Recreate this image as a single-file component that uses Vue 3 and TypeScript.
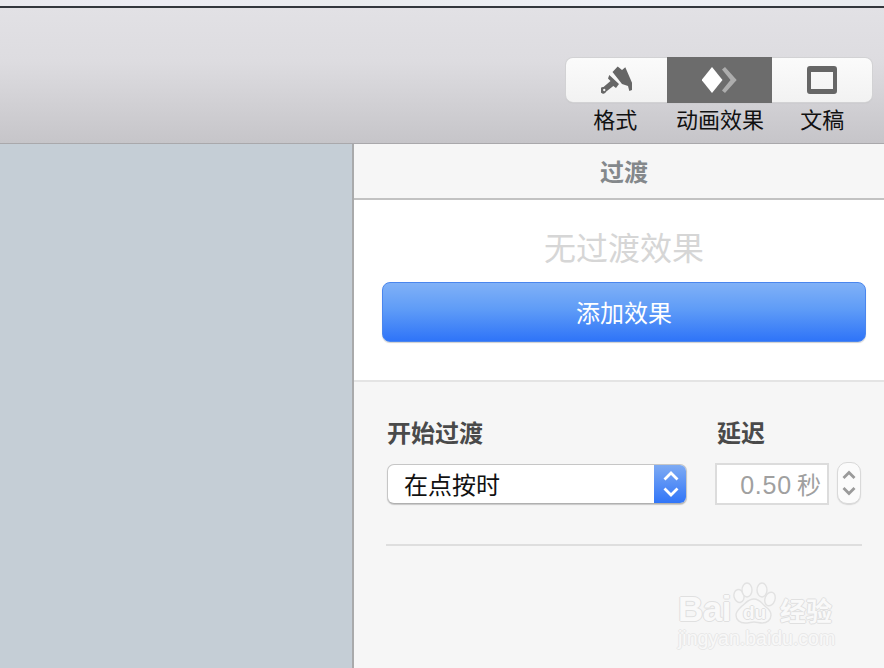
<script setup lang="ts">
const tabs = ['格式', '动画效果', '文稿']
</script>

<template>
  <div class="window">
    <div class="strip"></div>
    <header class="toolbar">
      <div class="tabs">
        <div class="seg seg-a">
          <svg width="32" height="28" viewBox="0 0 32 28">
            <path d="M11.500 6L16.700.5 21 4l3.300-2.700L31 16.700V24l-2.700 1-1.300-5-6-2z" fill="#666"/>
            <path fill-rule="evenodd" d="M8.300 9l9.700 9-3 4-2.700-2-7 5.500A3.300 3.300 0 1 1 2.500 21L9.500 15 7 12.500zM3.200 22.800a1.200 1.200 0 1 0 .1 0z" fill="#666"/>
          </svg>
        </div>
        <div class="seg seg-b">
          <svg width="35" height="28" viewBox="0 0 35 28">
            <path d="M20 3.500L23 1l11.700 13L23 27l-3-2.500L28.500 14z" fill="#adadad"/>
            <path d="M10 1L20.500 14 10 27-.5 14z" fill="#fff"/>
          </svg>
        </div>
        <div class="seg seg-c"><span class="doc"></span></div>
      </div>
      <div class="labels">
        <span v-for="t in tabs" :key="t">{{ t }}</span>
      </div>
    </header>
    <div class="body">
      <aside class="canvas"></aside>
      <section class="panel">
        <div class="panel-head">过渡</div>
        <div class="effect">
          <div class="none">无过渡效果</div>
          <button class="add">添加效果</button>
        </div>
        <div class="settings">
          <div class="row">
            <div class="col-start">
              <div class="label">开始过渡</div>
              <div class="select">
                <span class="select-text">在点按时</span>
                <span class="select-arrows">
                  <svg width="18" height="30" viewBox="0 0 18 30" fill="none" stroke="#fff" stroke-width="2.800">
                    <path d="M2.500 10.500L9 4l6.500 6.500M2.500 19.500L9 26l6.500-6.500"/>
                  </svg>
                </span>
              </div>
            </div>
            <div class="col-delay">
              <div class="label">延迟</div>
              <div class="delay-row">
                <div class="input"><span class="num">0.50</span><span>秒</span></div>
                <div class="stepper">
                  <svg width="14" height="30" viewBox="0 0 14 30" fill="none" stroke="#9a9a9a" stroke-width="2.800">
                    <path d="M1.500 10L7 4.500 12.500 10M1.500 20L7 25.500 12.500 20"/>
                  </svg>
                </div>
              </div>
            </div>
          </div>
          <div class="divider"></div>
        </div>
      </section>
    </div>
    <div class="mark">
      <svg class="paw" width="46" height="44" viewBox="0 0 46 44" fill="#f8f8f8" stroke="#e2e2e2" stroke-width="1.400">
        <ellipse cx="7" cy="14" rx="5" ry="6.500" transform="rotate(-15 7 14)"/>
        <ellipse cx="15" cy="8" rx="5" ry="7"/>
        <ellipse cx="30" cy="8" rx="5" ry="7"/>
        <ellipse cx="38" cy="17" rx="5" ry="7" transform="rotate(20 38 17)"/>
        <path d="M22 17c6 0 8 5 12 8 4 3 5 5 5 8 0 5-4 8-9 8-3 0-5-1-8-1s-5 1-9 1c-5 0-9-3-9-8 0-4 3-6 6-9 4-3 6-7 12-7z"/>
      </svg>
      <div class="mark-main">
        <span class="bai">Bai</span><span class="du">du</span><span class="jy">经验</span>
      </div>
      <div class="mark-url">jingyan.baidu.com</div>
    </div>
  </div>
</template>

<style>
html, body { margin: 0; padding: 0; }
</style>

<style scoped>
.window {
  position: relative;
  width: 884px;
  height: 668px;
  overflow: hidden;
  display: flex;
  flex-direction: column;
  font-family: "Noto Sans CJK SC", "Liberation Sans", sans-serif;
  background: #f6f6f6;
}
.strip {
  height: 6px;
  flex: none;
  background: linear-gradient(90deg, #e9e9ee, #ececf3 18%, #e9ebee 40%, #eef0f6 70%, #e8ebef);
  border-bottom: 2px solid #33373d;
}
.toolbar {
  height: 136px;
  flex: none;
  box-sizing: border-box;
  padding: 50px 12px 0 566px;
  background: linear-gradient(180deg, #e2e1e5 0%, #dddce0 40%, #c6c5c9 100%);
  border-bottom: 1px solid #a9a8ab;
}
.tabs {
  display: flex;
  width: 306px;
  height: 44px;
  box-sizing: border-box;
  border-radius: 7px;
  box-shadow: 0 0 0 1px #d2d2d4, 0 1px 1px #b0b0b0;
}
.seg {
  display: flex;
  align-items: center;
  justify-content: center;
  background: linear-gradient(180deg, #fbfbfb, #f2f2f2);
}
.seg-a { width: 101px; border-radius: 7px 0 0 7px; }
.seg-b { width: 105px; background: #6c6c6c; box-shadow: 0 -1px 0 #6c6c6c, 0 1px 0 #6c6c6c; }
.seg-c { width: 100px; border-radius: 0 7px 7px 0; }
.doc {
  display: block;
  width: 30px;
  height: 28px;
  box-sizing: border-box;
  border: 4px solid #666;
  border-top-width: 6px;
  border-bottom-width: 5px;
  border-radius: 3px;
}
.labels {
  display: flex;
  width: 306px;
  font-size: 22px;
  line-height: 32px;
  margin-top: 0;
  color: #111;
}
.labels span { text-align: center; }
.labels span:nth-child(1) { width: 101px; margin-left: -1px; margin-right: 1px; }
.labels span:nth-child(2) { width: 105px; margin-left: 1px; margin-right: -1px; }
.labels span:nth-child(3) { width: 100px; margin-left: 1px; }
.body {
  flex: 1;
  display: flex;
  min-height: 0;
}
.canvas {
  width: 352px;
  flex: none;
  background: #c5ced6;
  border-right: 2px solid #a9aaab;
}
.panel {
  flex: 1;
  min-width: 0;
  display: flex;
  flex-direction: column;
}
.panel-head {
  height: 54px;
  flex: none;
  box-sizing: content-box;
  padding-left: 10px;
  text-align: center;
  font-size: 24px;
  font-weight: 700;
  line-height: 54px;
  color: #84888b;
  border-bottom: 2px solid #c2c2c2;
}
.effect {
  height: 182px;
  flex: none;
  box-sizing: border-box;
  background: #fff;
  border-bottom: 2px solid #e4e4e4;
  padding: 23px 18px 0 28px;
}
.none {
  text-align: center;
  font-size: 32px;
  line-height: 46px;
  color: #d6d6d6;
  height: 59px;
}
.add {
  display: block;
  width: 100%;
  height: 60px;
  padding: 0 0 2px;
  border: 1px solid #4a86ee;
  border-radius: 8px;
  background: linear-gradient(180deg, #80b1f7 0%, #5f9cf7 45%, #2f74f8 100%);
  color: #fff;
  font-family: inherit;
  font-size: 24px;
  box-shadow: 0 1px 1px #d0d0d0;
}
.settings {
  padding: 33px 22px 0 32px;
}
.row {
  display: flex;
  height: 129px;
  box-sizing: border-box;
}
.col-start { width: 329px; margin-left: 1px; }
.col-delay { flex: 1; }
.label {
  font-size: 24px;
  font-weight: 700;
  line-height: 34px;
  color: #4a4a4a;
  height: 49px;
}
.col-delay .label { margin-left: 1px; }
.select {
  width: 300px;
  height: 40px;
  box-sizing: border-box;
  display: flex;
  background: #fff;
  border: 1px solid #c6c6c6;
  border-bottom-color: #b0b0b0;
  border-radius: 7px;
  overflow: hidden;
  box-shadow: 0 1px 1px #c8c8c8;
}
.select-text {
  flex: 1;
  padding-left: 16px;
  font-size: 24px;
  line-height: 38px;
  color: #111;
}
.select-arrows {
  width: 33px;
  display: flex;
  align-items: center;
  justify-content: center;
  background: linear-gradient(180deg, #80acf3, #2f74f8);
  margin: -1px -1px -1px 0;
}
.delay-row {
  display: flex;
  gap: 8px;
  margin-top: -1px;
  margin-left: -1px;
}
.input {
  width: 114px;
  height: 42px;
  box-sizing: border-box;
  background: #fff;
  border: 2px solid #dcdcdc;
  text-align: right;
  padding-right: 6px;
  font-size: 24px;
  line-height: 38px;
  color: #a0a0a0;
  white-space: nowrap;
}
.num {
  font-family: "Liberation Sans", sans-serif;
  font-size: 25px;
  letter-spacing: 0.8px;
  margin-right: 5px;
}
.stepper {
  width: 24px;
  height: 42px;
  margin-top: -1px;
  box-sizing: border-box;
  border: 1px solid #d9d9d9;
  border-radius: 10px;
  background: #fbfbfb;
  display: flex;
  align-items: center;
  justify-content: center;
  box-shadow: 0 1px 1px #d8d8d8;
}
.divider {
  height: 2px;
  background: #dedede;
  width: 476px;
}
.mark {
  position: absolute;
  left: 678px;
  top: 582px;
  width: 170px;
  height: 70px;
  pointer-events: none;
}
.paw {
  position: absolute;
  left: 54px;
  top: 0;
}
.mark-main {
  position: absolute;
  left: 0;
  top: 12px;
  display: flex;
  align-items: baseline;
  white-space: nowrap;
  color: #f9f9f9;
  text-shadow: -1px 0 #e0e0e0, 1px 0 #e0e0e0, 0 -1px #e0e0e0, 0 1px #e0e0e0;
}
.bai {
  font-family: "Liberation Sans", sans-serif;
  font-size: 35px;
  font-weight: 700;
  line-height: 30px;
  letter-spacing: -0.5px;
}
.du {
  font-family: "Liberation Sans", sans-serif;
  font-size: 19px;
  font-weight: 700;
  line-height: 20px;
  margin-left: 12px;
  width: 37px;
  position: relative;
  top: -2px;
}
.jy {
  font-size: 26px;
  font-weight: 700;
  line-height: 30px;
  letter-spacing: 0;
}
.mark-url {
  position: absolute;
  left: 0;
  top: 45px;
  font-family: "Liberation Sans", sans-serif;
  font-size: 19.5px;
  line-height: 22px;
  white-space: nowrap;
  color: #f8f8f8;
  text-shadow: -1px 0 #e8e8e8, 1px 0 #e8e8e8, 0 -1px #e8e8e8, 0 1px #e8e8e8;
}
</style>
